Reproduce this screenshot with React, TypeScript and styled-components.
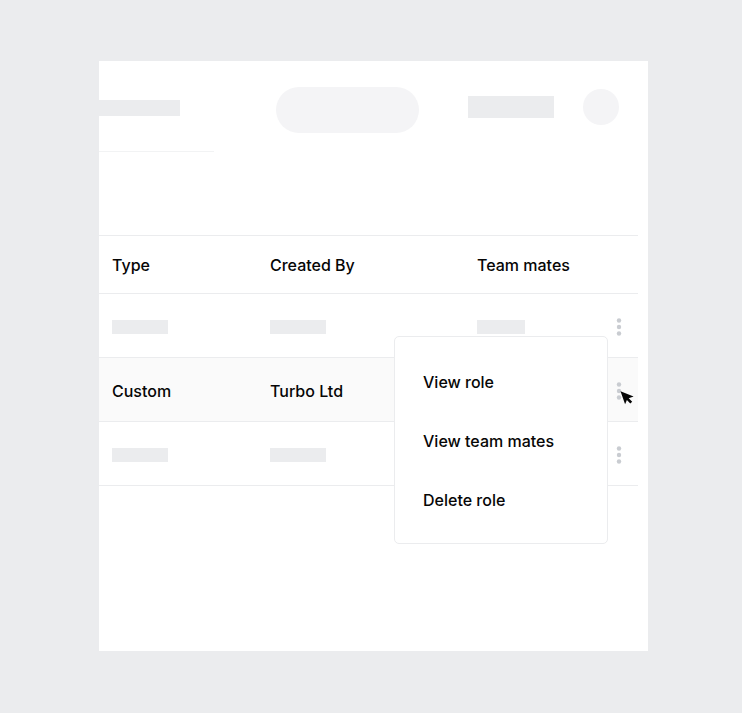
import React from "react";
import styled, { createGlobalStyle, css } from "styled-components";

const GlobalStyle = createGlobalStyle`
  *, *::before, *::after { box-sizing: border-box; }
  body {
    margin: 0;
    background: #ebecee;
    color: #060606;
    font-family: Inter, "Liberation Sans", sans-serif;
    font-size: 16px;
    font-weight: 500;
    line-height: 24px;
  }
`;

const Page = styled.div`
  display: flex;
  min-height: 100vh;
  padding: 61px 94px 62px 99px;
`;

const Panel = styled.main`
  flex: 1;
  min-width: 0;
  padding: 26px 10px 0 0;
  background: #ffffff;
`;

const Header = styled.header`
  display: grid;
  grid-template-columns: 177fr 192fr 115fr 55fr;
  align-items: start;
  height: 148px;
`;

const Tab = styled.div`
  width: 115px;
  height: 65px;
  padding-top: 13px;
  border-bottom: 1px solid #f2f3f4;
`;

const Placeholder = styled.div<{ $width: number; $height: number }>`
  width: ${(p) => p.$width}px;
  height: ${(p) => p.$height}px;
  background: #ebecee;
`;

const SearchPill = styled.div`
  width: 143px;
  height: 46px;
  border-radius: 23px;
  background: #f4f4f6;
`;

const HeaderLabel = styled.div`
  padding-top: 9px;
`;

const Avatar = styled.div`
  width: 36px;
  height: 36px;
  margin-top: 2px;
  border-radius: 50%;
  background: #f4f4f6;
`;

const Table = styled.table`
  width: 100%;
  table-layout: fixed;
  border-spacing: 0;
  border-top: 1px solid #ebecee;
`;

const Column = styled.col<{ $width?: number }>`
  ${(p) => p.$width && css`width: ${p.$width}px;`}
`;

const HeadCell = styled.th`
  height: 58px;
  padding: 0 0 0 13px;
  border-bottom: 1px solid #ebecee;
  font-weight: 500;
  text-align: left;
`;

const Row = styled.tr<{ $active?: boolean }>`
  background: ${(p) => (p.$active ? "#fafafa" : "transparent")};
`;

const Cell = styled.td`
  height: 64px;
  padding: 2px 0 0 13px;
  border-bottom: 1px solid #ebecee;
`;

const ActionCell = styled(Cell)`
  position: relative;
  padding: 2px 11px 0 0;
`;

const MoreButton = styled.button`
  display: flex;
  align-items: center;
  justify-content: center;
  width: 16px;
  height: 24px;
  margin-left: auto;
  padding: 0;
  border: 0;
  background: none;
  color: #c9ccd1;
`;

const Menu = styled.div`
  position: absolute;
  top: -22px;
  right: 30px;
  z-index: 1;
  display: flex;
  flex-direction: column;
  width: 214px;
  padding: 15px 0 14px;
  border: 1px solid #ebecee;
  border-radius: 5px;
  background: #ffffff;
`;

const MenuItem = styled.button`
  height: 59px;
  padding: 0 28px;
  border: 0;
  background: none;
  color: inherit;
  font: inherit;
  text-align: left;
`;

const Pointer = styled.svg`
  position: absolute;
  top: 33px;
  right: 4px;
  z-index: 2;
`;

function MoreActions({ label, expanded }: { label: string; expanded?: boolean }) {
  return (
    <MoreButton type="button" aria-label={label} aria-haspopup="menu" aria-expanded={!!expanded}>
      <svg width="6" height="18" viewBox="0 0 6 18" fill="currentColor" aria-hidden="true">
        <circle cx="3" cy="2.5" r="2.2" />
        <circle cx="3" cy="9" r="2.2" />
        <circle cx="3" cy="15.5" r="2.2" />
      </svg>
    </MoreButton>
  );
}

function LoadingRow({ label }: { label: string }) {
  return (
    <Row>
      <Cell><Placeholder $width={56} $height={14} /></Cell>
      <Cell><Placeholder $width={56} $height={14} /></Cell>
      <Cell><Placeholder $width={48} $height={14} /></Cell>
      <ActionCell><MoreActions label={label} /></ActionCell>
    </Row>
  );
}

const actions = ["View role", "View team mates", "Delete role"];

export default function App() {
  return (
    <>
      <GlobalStyle />
      <Page>
        <Panel>
          <Header>
            <Tab><Placeholder $width={81} $height={16} /></Tab>
            <SearchPill />
            <HeaderLabel><Placeholder $width={86} $height={22} /></HeaderLabel>
            <Avatar />
          </Header>
          <Table>
            <colgroup>
              <Column $width={158} />
              <Column $width={207} />
              <Column />
              <Column $width={44} />
            </colgroup>
            <thead>
              <tr>
                <HeadCell scope="col">Type</HeadCell>
                <HeadCell scope="col">Created By</HeadCell>
                <HeadCell scope="col">Team mates</HeadCell>
                <HeadCell scope="col" aria-label="Actions" />
              </tr>
            </thead>
            <tbody>
              <LoadingRow label="Actions for first role" />
              <Row $active>
                <Cell>Custom</Cell>
                <Cell>Turbo Ltd</Cell>
                <Cell />
                <ActionCell>
                  <MoreActions label="Actions for custom role" expanded />
                  <Menu role="menu">
                    {actions.map((action) => (
                      <MenuItem key={action} type="button" role="menuitem">{action}</MenuItem>
                    ))}
                  </Menu>
                  <Pointer width="14" height="14" viewBox="0 0 14 14" aria-hidden="true">
                    <path d="M0.5 0.3 L13.6 5.4 L8.7 7.2 L12.2 10.7 L10.3 12.4 L6.9 8.9 L5.1 13.2 Z" fill="#060606" />
                  </Pointer>
                </ActionCell>
              </Row>
              <LoadingRow label="Actions for third role" />
            </tbody>
          </Table>
        </Panel>
      </Page>
    </>
  );
}
